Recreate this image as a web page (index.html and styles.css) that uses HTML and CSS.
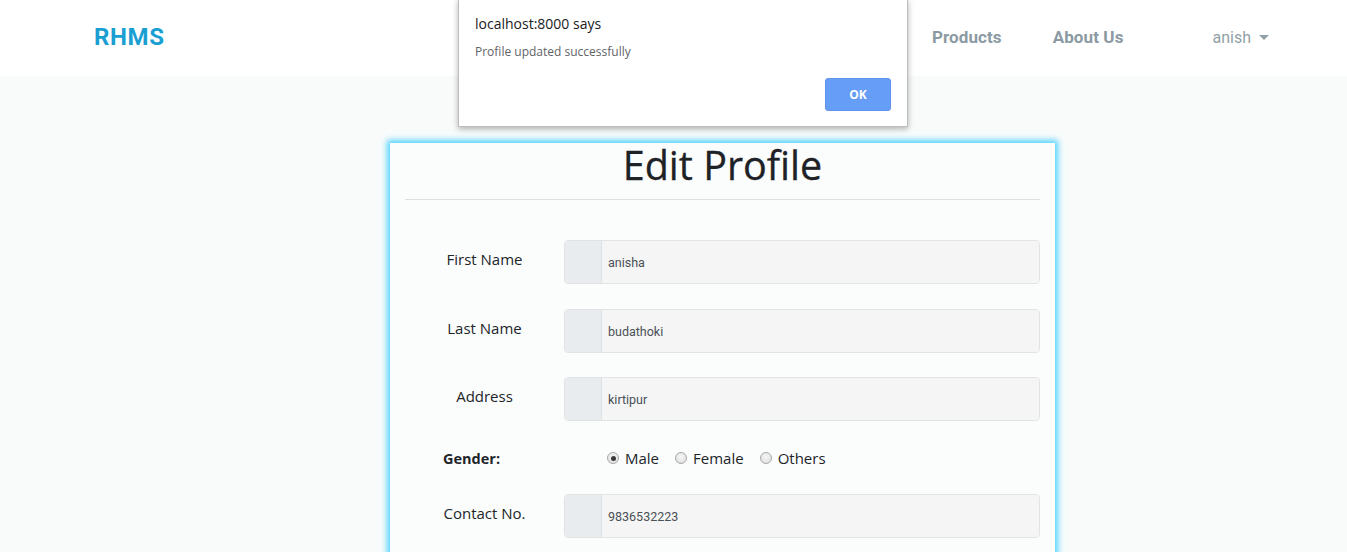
FILE: index.html
```html
<!DOCTYPE html>
<html>
<head>
<meta charset="utf-8">
<link rel="stylesheet" href="styles.css">
</head>
<body>
<nav class="navbar">
  <div class="brand">RHMS</div>
  <div class="nav-links">
    <a class="nav-link">Products</a>
    <a class="nav-link">About Us</a>
    <a class="nav-user">anish <span class="caret"></span></a>
  </div>
</nav>
<main class="page">
  <section class="card">
    <h1 class="title">Edit Profile</h1>
    <hr class="divider">
    <form class="form">
      <div class="row">
        <label class="label">First Name</label>
        <div class="input-group"><span class="addon"></span><span class="input">anisha</span></div>
      </div>
      <div class="row">
        <label class="label">Last Name</label>
        <div class="input-group"><span class="addon"></span><span class="input">budathoki</span></div>
      </div>
      <div class="row">
        <label class="label">Address</label>
        <div class="input-group"><span class="addon"></span><span class="input">kirtipur</span></div>
      </div>
      <div class="gender-row">
        <span class="gender-label">Gender:</span>
        <div class="radios">
          <span class="radio checked"></span><span class="radio-text">Male</span>
          <span class="radio"></span><span class="radio-text">Female</span>
          <span class="radio"></span><span class="radio-text">Others</span>
        </div>
      </div>
      <div class="row">
        <label class="label">Contact No.</label>
        <div class="input-group"><span class="addon"></span><span class="input">9836532223</span></div>
      </div>
    </form>
  </section>
</main>
<div class="dialog">
  <div class="dialog-title">localhost:8000 says</div>
  <div class="dialog-msg">Profile updated successfully</div>
  <div class="dialog-actions"><button class="ok">OK</button></div>
</div>
</body>
</html>
```
FILE: styles.css
```css
* { box-sizing: border-box; }
html, body { margin: 0; padding: 0; }
body {
  background: #f9fbfb;
  font-family: "Open Sans", "Noto Sans", sans-serif;
  color: #212529;
  height: 552px;
  overflow: hidden;
}
.navbar {
  height: 76px;
  background: #ffffff;
  display: flex;
  align-items: center;
  justify-content: space-between;
  padding: 0 78px 0 94px;
}
.brand {
  font-family: "Roboto", sans-serif;
  font-weight: 700;
  font-size: 24px;
  color: #1b9fd3;
  letter-spacing: 0.6px;
  margin-top: -2px;
}
.nav-links {
  display: flex;
  align-items: center;
  font-family: "Roboto", sans-serif;
  font-size: 16px;
  margin-top: -2px;
}
.nav-link {
  font-weight: 700;
  font-size: 17px;
  letter-spacing: 0.1px;
  color: #8b9aa3;
  margin-right: 51px;
}
.nav-user {
  color: #919fa7;
  margin-left: 38px;
  display: flex;
  align-items: center;
}
.caret {
  display: inline-block;
  width: 0; height: 0;
  border-left: 5px solid transparent;
  border-right: 5px solid transparent;
  border-top: 5px solid #919fa7;
  margin-left: 8px;
}
.page {
  display: flex;
  justify-content: center;
  padding-top: 67px;
  padding-left: 98px;
  height: 476px;
  overflow: hidden;
}
.card {
  width: 665px;
  flex: none;
  background: #fbfdfd;
  box-shadow: 0 0 6px 3px #54d3ff;
  padding: 0 15px;
  height: 420px;
}
.title {
  margin: 0;
  text-align: center;
  font-weight: 500;
  font-size: 39.5px;
  line-height: 44px;
  padding-top: 0;
  color: #1e2125;
  -webkit-text-stroke: 0.3px #1e2125;
  font-family: "Open Sans", "Noto Sans", sans-serif;
}
.divider {
  margin: 12px 0 0 0;
  border: 0;
  border-top: 1px solid #dedfe0;
}
.form { padding-top: 40px; }
.row {
  display: grid;
  grid-template-columns: 159px 476px;
  margin-bottom: 24px;
}
.row:first-child { margin-bottom: 25px; }
.label {
  text-align: center;
  font-size: 15px;
  line-height: 22px;
  padding-top: 8px;
  color: #212529;
}
.input-group {
  display: flex;
  height: 44px;
  border: 1px solid #e2e3e4;
  border-radius: 4px;
  overflow: hidden;
}
.addon {
  width: 37px;
  background: #e9ecef;
  border-right: 1px solid #dfe2e5;
}
.input {
  flex: 1;
  background: #f5f5f5;
  font-family: "Roboto", sans-serif;
  font-size: 12.5px;
  color: #495057;
  display: flex;
  align-items: center;
  padding-left: 6px;
}
.gender-row {
  display: flex;
  align-items: center;
  height: 24px;
  margin-top: 25px;
  margin-bottom: 24px;
}
.gender-label {
  font-weight: 700;
  font-size: 14.5px;
  width: 202px;
  padding-left: 38px;
}
.radios {
  display: flex;
  align-items: center;
  font-size: 15px;
  color: #212529;
}
.radio {
  width: 12px; height: 12px;
  border-radius: 50%;
  border: 1px solid #a9a9a9;
  background: radial-gradient(circle at 50% 40%, #f6f6f6, #dcdcdc);
  margin-right: 6px;
  position: relative;
}
.radio.checked::after {
  content: "";
  position: absolute;
  left: 2.5px; top: 2.5px;
  width: 5px; height: 5px;
  border-radius: 50%;
  background: #3a3a3a;
}
.radio-text { margin-right: 16px; }
.dialog {
  position: absolute;
  left: 458px;
  top: -1px;
  width: 450px;
  height: 128px;
  background: #ffffff;
  border: 1px solid #bdbdbd;
  box-shadow: 0 2px 6px rgba(0,0,0,0.3);
  padding: 14px 16px 0 16px;
  font-family: "Open Sans", "Noto Sans", sans-serif;
}
.dialog-title {
  font-size: 14px;
  color: #202124;
  line-height: 20px;
}
.dialog-msg {
  margin-top: 9px;
  font-size: 12px;
  color: #5f6368;
  line-height: 18px;
}
.dialog-actions {
  display: flex;
  justify-content: flex-end;
  margin-top: 17px;
}
.ok {
  width: 66px;
  height: 33px;
  background: #669df6;
  border: 1px solid #5f95ec;
  border-radius: 3px;
  color: #ffffff;
  font-weight: 700;
  font-size: 12px;
  font-family: "Open Sans", sans-serif;
}
```
